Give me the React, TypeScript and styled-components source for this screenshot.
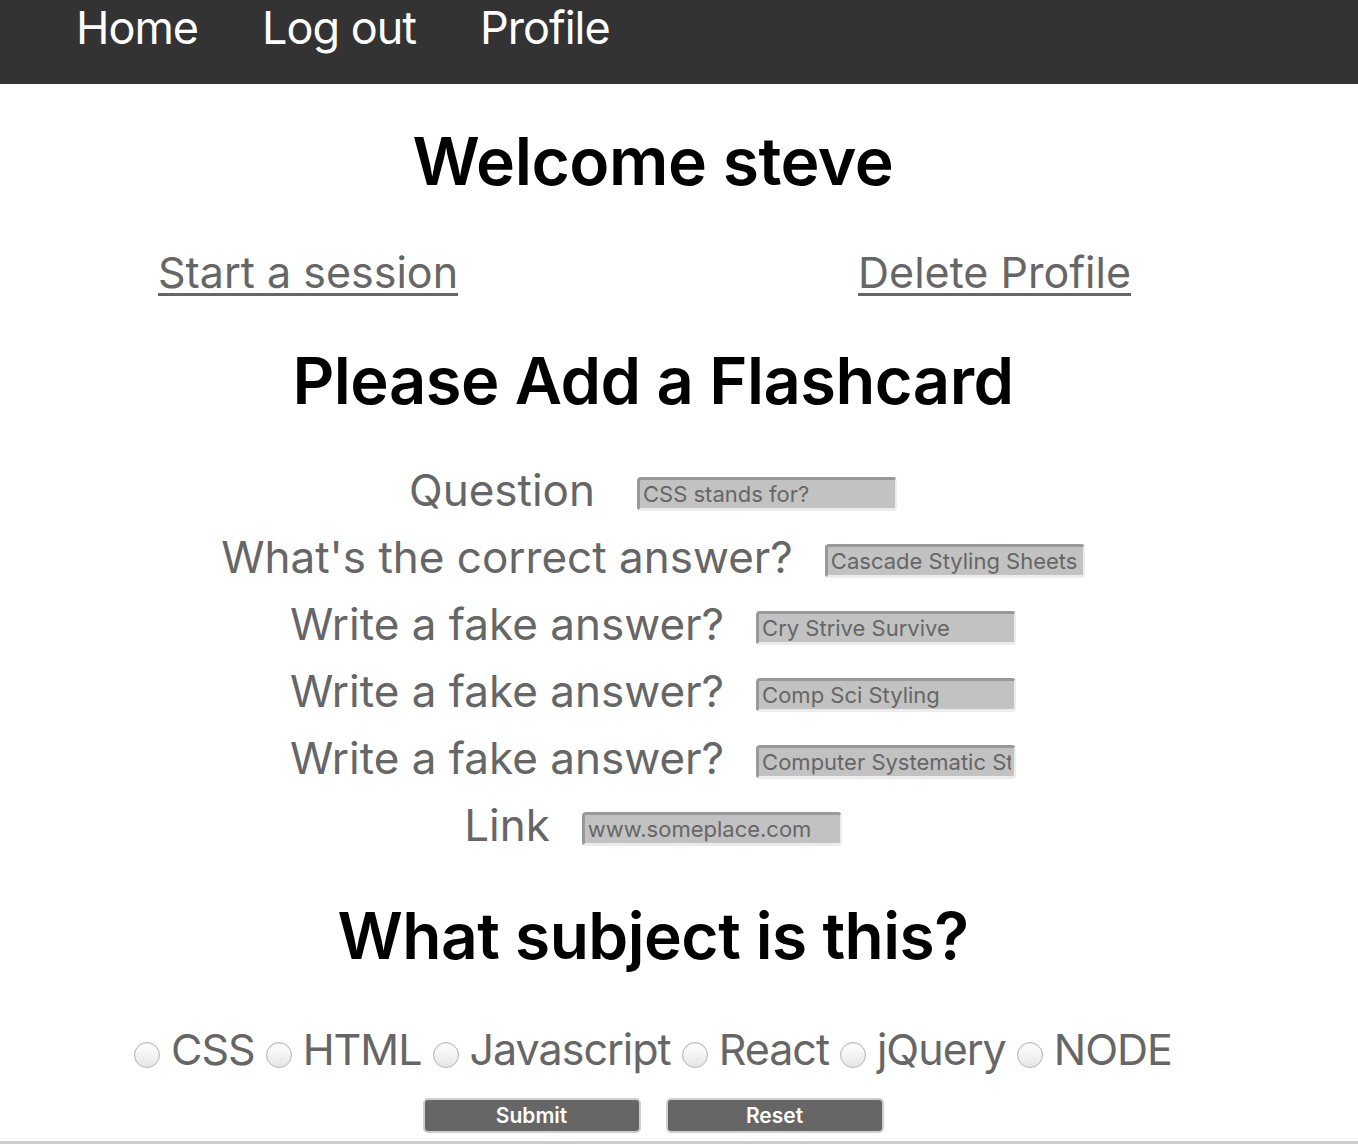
import React from "react";
import styled, { createGlobalStyle } from "styled-components";

const GlobalStyle = createGlobalStyle`
  html, body { margin: 0; padding: 0; background: #fff; }
  body { font-family: Inter, "Noto Sans", "Liberation Sans", sans-serif; }
  * { box-sizing: border-box; }
`;

const Nav = styled.nav`
  height: 84px;
  background: #333333;
  display: flex;
  align-items: flex-start;
  gap: 64px;
  padding: 0 0 0 76px;
`;

const NavLink = styled.a`
  color: #ffffff;
  font-size: 45px;
  line-height: normal;
  font-weight: 400;
  text-decoration: none;
  letter-spacing: -1px;
`;

const Main = styled.main`
  width: 1306px;
  display: flex;
  flex-direction: column;
  align-items: center;
`;

const Title = styled.h1<{ $top: number; $size: number; $lh: number }>`
  margin: ${(p) => p.$top}px 0 0;
  font-size: ${(p) => p.$size}px;
  line-height: ${(p) => p.$lh}px;
  font-weight: 600;
  color: #000;
  letter-spacing: -0.5px;
`;

const LinkRow = styled.div`
  align-self: stretch;
  display: flex;
  justify-content: space-between;
  padding: 0 175px 0 158px;
  margin-top: 42px;
`;

const TextLink = styled.a`
  color: #666666;
  font-size: 43px;
  line-height: 56px;
  text-decoration: underline;
  text-decoration-thickness: 3px;
  text-underline-offset: 5px;
`;

const Form = styled.form`
  display: flex;
  flex-direction: column;
  align-items: center;
  margin-top: 35px;
`;

const Row = styled.div`
  height: 67px;
  display: flex;
  align-items: center;
  gap: 32px;
`;

const Label = styled.label<{ $extra?: number }>`
  color: #666666;
  font-size: 44px;
  line-height: 56px;
  margin-right: ${(p) => p.$extra ?? 0}px;
`;

const Field = styled.input`
  width: 260px;
  height: 34px;
  margin-top: 8px;
  background: #c2c2c2;
  border-style: solid;
  border-width: 3px 2px 3px 3px;
  border-color: #999999 #ececec #ececec #999999;
  border-radius: 4px;
  padding: 0 3px;
  font-family: Inter, "Noto Sans", sans-serif;
  font-size: 22px;
  color: #666666;
  outline: none;
`;

const RadioRow = styled.div`
  margin-top: 45px;
  display: flex;
  align-items: baseline;
  gap: 11px;
  font-size: 43px;
  line-height: 56px;
  color: #666666;
`;

const Radio = styled.input.attrs({ type: "radio" })`
  appearance: none;
  -webkit-appearance: none;
  width: 26px;
  height: 26px;
  margin: 0;
  border-radius: 50%;
  border: 1px solid #b5b5b5;
  background: linear-gradient(#ffffff, #e6e6e6);
  box-shadow: inset 0 1px 1px rgba(0, 0, 0, 0.08);
  position: relative;
  top: 3px;
`;

const Option = styled.span`
  letter-spacing: -1px;
`;

const Buttons = styled.div`
  margin-top: 21px;
  display: flex;
  gap: 25px;
`;

const Button = styled.button`
  width: 218px;
  height: 35px;
  background: #666666;
  color: #ffffff;
  border: 2px solid #cfcfcf;
  border-radius: 5px;
  font-family: Inter, "Liberation Sans", sans-serif;
  font-weight: 600;
  font-size: 21px;
  padding: 0;
`;

const Footer = styled.div`
  margin-top: 8px;
  height: 3px;
  background: #cccccc;
`;

const rows = [
  { label: "Question", value: "CSS stands for?", extra: 10 },
  { label: "What's the correct answer?", value: "Cascade Styling Sheets" },
  { label: "Write a fake answer?", value: "Cry Strive Survive" },
  { label: "Write a fake answer?", value: "Comp Sci Styling" },
  { label: "Write a fake answer?", value: "Computer Systematic Styling" },
  { label: "Link", value: "www.someplace.com" },
];

const subjects = ["CSS", "HTML", "Javascript", "React", "jQuery", "NODE"];

export default function App() {
  return (
    <>
      <GlobalStyle />
      <Nav>
        <NavLink href="#">Home</NavLink>
        <NavLink href="#">Log out</NavLink>
        <NavLink href="#">Profile</NavLink>
      </Nav>
      <Main>
        <Title $top={36} $size={66} $lh={82}>
          Welcome steve
        </Title>
        <LinkRow>
          <TextLink href="#">Start a session</TextLink>
          <TextLink href="#">Delete Profile</TextLink>
        </LinkRow>
        <Title $top={41} $size={65} $lh={80}>
          Please Add a Flashcard
        </Title>
        <Form onSubmit={(e) => e.preventDefault()}>
          {rows.map((r, i) => (
            <Row key={i}>
              <Label $extra={r.extra}>{r.label}</Label>
              <Field defaultValue={r.value} />
            </Row>
          ))}
          <Title $top={38} $size={64} $lh={80}>
            What subject is this?
          </Title>
          <RadioRow>
            {subjects.map((s) => (
              <React.Fragment key={s}>
                <Radio name="subject" />
                <Option>{s}</Option>
              </React.Fragment>
            ))}
          </RadioRow>
          <Buttons>
            <Button type="submit">Submit</Button>
            <Button type="reset">Reset</Button>
          </Buttons>
        </Form>
      </Main>
      <Footer />
    </>
  );
}
